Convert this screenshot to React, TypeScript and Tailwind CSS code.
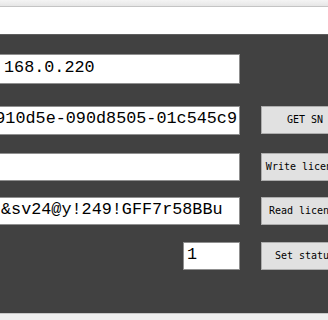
import React from "react";

const inputFont = { fontFamily: '"Liberation Mono", monospace' };
const btnFont = { fontFamily: '"DejaVu Sans Mono", monospace' };

function Field({
  text,
  className,
  align = "start",
  pad = "",
}: {
  text: string;
  className: string;
  align?: "start" | "end";
  pad?: string;
}) {
  return (
    <div
      className={`shrink-0 flex items-center overflow-hidden whitespace-nowrap bg-white border border-[#8f8f8f] text-black text-[16.8px] leading-none ${
        align === "end" ? "justify-end" : "justify-start"
      } ${pad} ${className}`}
      style={inputFont}
    >
      <span className="shrink-0 pb-[2px]">{text}</span>
    </div>
  );
}

function Btn({ label, className }: { label: string; className: string }) {
  return (
    <div
      className={`ml-[21px] w-[88px] shrink-0 flex items-center justify-center overflow-hidden whitespace-nowrap bg-[#e1e1e1] border border-[#adadad] text-[10px] text-black leading-none ${className}`}
      style={btnFont}
    >
      <span className="shrink-0">{label}</span>
    </div>
  );
}

export default function App() {
  return (
    <div className="w-[328px] h-[320px] overflow-hidden flex flex-col bg-white">
      <div className="h-[7px] shrink-0 bg-gradient-to-b from-[#f4f4f4] to-[#e6e6e6] border-b border-[#c4c4c4]" />
      <div className="h-[27px] shrink-0 bg-white" />
      <div className="h-[279px] shrink-0 bg-[#414141] border-t border-[#5e5e5e] flex flex-col pt-[19px]">
        <div className="flex h-[30px]">
          <Field text="168.0.220" className="w-[240px] h-[30px] border-l-0" pad="pl-[4px]" />
        </div>
        <div className="flex h-[29px] mt-[22px]">
          <Field
            text="910d5e-090d8505-01c545c9"
            className="w-[240px] h-[29px] border-l-0"
            align="end"
            pad="pr-[2px]"
          />
          <Btn label="GET SN" className="h-[28px]" />
        </div>
        <div className="flex h-[28px] mt-[18px]">
          <Field text="" className="w-[240px] h-[28px] border-l-0" />
          <Btn label="Write license" className="h-[28px]" />
        </div>
        <div className="flex h-[28px] mt-[16px]">
          <Field
            text="&sv24@y!249!GFF7r58BBu"
            className="w-[240px] h-[28px] border-l-0"
            pad="pl-[1px]"
          />
          <Btn label="Read license" className="h-[28px]" />
        </div>
        <div className="flex h-[28px] mt-[17px]">
          <div className="w-[183px] shrink-0" />
          <Field text="1" className="w-[57px] h-[28px]" pad="pl-[3px]" />
          <Btn label="Set status" className="h-[28px]" />
        </div>
      </div>
      <div className="flex-1 bg-[#efefef] border-t border-[#c8c8c8]" />
    </div>
  );
}
